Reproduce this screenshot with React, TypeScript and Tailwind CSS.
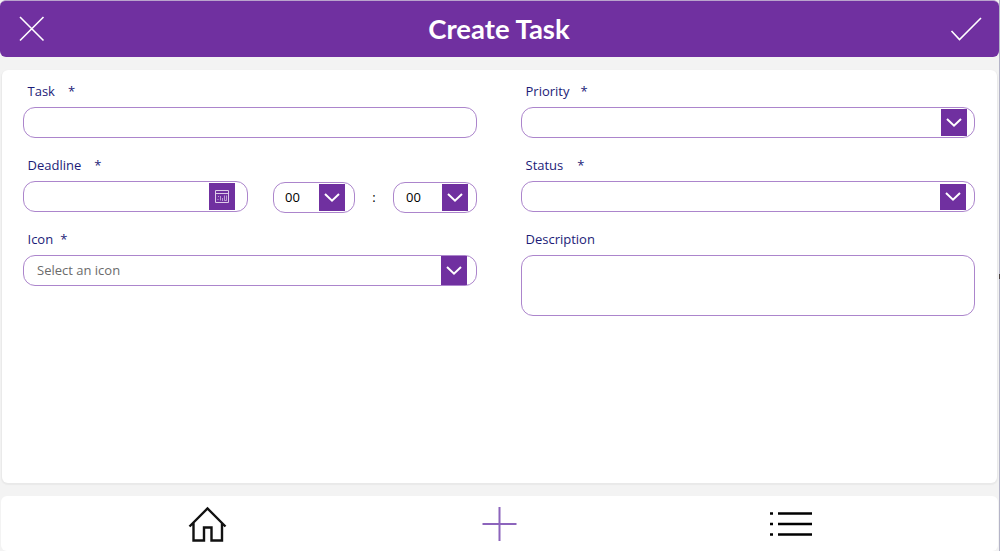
import type { ReactNode } from "react";

function Label({ text, required, gap = "ml-[11px]" }: { text: string; required?: boolean; gap?: string }) {
  return (
    <label className="flex h-[18px] items-center pl-[4.500px] text-[13px] leading-[18px] text-[#1c1c78]">
      <span>{text}</span>
      {required && <span className={gap}>*</span>}
    </label>
  );
}

function Field({ className = "h-[74px]", children }: { className?: string; children: ReactNode }) {
  return <div className={`flex flex-col gap-[7px] ${className}`}>{children}</div>;
}

function Chevron({ className }: { className: string }) {
  return (
    <span className={`flex w-[26px] shrink-0 items-center justify-center bg-[#7030a0] ${className}`}>
      <svg width="18" height="12" viewBox="0 0 18 12" fill="none" stroke="#fff" strokeWidth="2">
        <path d="M2 2 9 8.700l7-6.700" />
      </svg>
    </span>
  );
}

const box = "flex rounded-[12px] border border-[#ac85cc] bg-white text-[13px]";

export default function App() {
  return (
    <div className="flex h-[551px] w-[1000px] overflow-hidden font-['Open_Sans',sans-serif]">
      <div className="flex w-[999px] flex-col bg-[#f3f3f3]">
        <header className="flex h-[57px] shrink-0 items-center justify-between rounded-md border-t border-[#b9a4cc] bg-[#7030a0] pr-4 pl-[18px]">
          <button aria-label="Cancel">
            <svg width="28" height="28" viewBox="0 0 28 28" fill="none" stroke="#fff" strokeWidth="1.6">
              <path d="m2 2 23.5 23.5M25.5 2 2 25.5" />
            </svg>
          </button>
          <h1 className="mb-px ml-[3px] font-['Lato',sans-serif] text-[27.5px] leading-9 font-bold text-white">Create Task</h1>
          <button aria-label="Save">
            <svg width="34" height="28" viewBox="0 0 34 28" fill="none" stroke="#fff" strokeWidth="1.6">
              <path d="m2.5 16 8 8.5L32 3" />
            </svg>
          </button>
        </header>

        <main className="mx-[2px] mt-[13px] grid h-[413px] shrink-0 grid-cols-[454px_454px] content-start gap-x-11 rounded-md bg-white pt-3 pl-[21px] shadow-[0_1px_1px_1px_#e9e9e9]">
          <Field>
            <Label text="Task" required gap="ml-[13px]" />
            <div className={`${box} h-[31px]`} />
          </Field>
          <Field>
            <Label text="Priority" required />
            <div className={`${box} h-[31px] items-center justify-end pr-[7px]`}>
              <Chevron className="h-[27px]" />
            </div>
          </Field>
          <Field>
            <Label text="Deadline" required gap="ml-[13px]" />
            <div className="flex items-start">
              <div className={`${box} h-[31px] w-[225px] items-center justify-end pr-3`}>
                <span className="flex h-[27px] w-[26px] items-center justify-center bg-[#7030a0]">
                  <svg width="14" height="13" viewBox="0 0 14 13" fill="none" stroke="#ddcbe8" strokeWidth="1">
                    <path d="M.5.5h13v12H.5zM.5 3.500h13" />
                    <path d="M2.500 9.500h1M5.500 6v4.500M3 6.500h1M7.500 8v3M9.500 5.500v5M11.500 5.500v5M9.500 10.500h2" strokeOpacity=".7" />
                  </svg>
                </span>
              </div>
              <div className={`${box} mt-px ml-[25px] h-[31px] w-[82px] items-center justify-between pr-[9px] pl-[11px]`}>
                <span>00</span>
                <Chevron className="h-[27px]" />
              </div>
              <span className="mt-px w-[38px] text-center text-[13px] leading-[31px]">:</span>
              <div className={`${box} mt-px h-[31px] w-[84px] items-center justify-between pr-[8px] pl-[12px]`}>
                <span>00</span>
                <Chevron className="h-[27px]" />
              </div>
            </div>
          </Field>
          <Field>
            <Label text="Status" required gap="ml-[14px]" />
            <div className={`${box} h-[31px] items-center justify-end pr-[8px]`}>
              <Chevron className="h-[26px]" />
            </div>
          </Field>
          <Field>
            <Label text="Icon" required gap="ml-[7px]" />
            <div className={`${box} h-[31px] items-center justify-between pr-[9px] pl-[13px] text-[#6b6b6b]`}>
              <span>Select an icon</span>
              <Chevron className="h-[29px]" />
            </div>
          </Field>
          <Field className="h-[86px]">
            <Label text="Description" />
            <div className={`${box} h-[61px]`} />
          </Field>
        </main>

        <nav className="mx-px mt-[13px] flex h-[55px] shrink-0 items-center rounded-md bg-white pt-px pl-[187px]">
          <svg width="40" height="38" viewBox="0 0 40 38" fill="none" stroke="#111" strokeWidth="2.400">
            <path d="M1.500 21.500 19.500 3.500l18 18M5.500 18v17.500h10.500V22.500h7.500v13H34V18" />
          </svg>
          <svg className="ml-[253px]" width="36" height="36" viewBox="0 0 36 36" fill="none" stroke="#8c64bc" strokeWidth="2">
            <path d="M18.500 1v34M1.500 18h34" />
          </svg>
          <svg className="ml-[251px]" width="46" height="28" viewBox="0 0 46 28" fill="none" stroke="#000" strokeWidth="2.400">
            <path d="M2 3.500h3M2 14h3M2 24.500h3M10 3.500h34M10 14h34M10 24.500h34" />
          </svg>
        </nav>
      </div>
      <div className="w-px bg-[#b4b4c8] pt-[274px]">
        <div className="h-[5px] bg-[#4a4040]" />
      </div>
    </div>
  );
}
